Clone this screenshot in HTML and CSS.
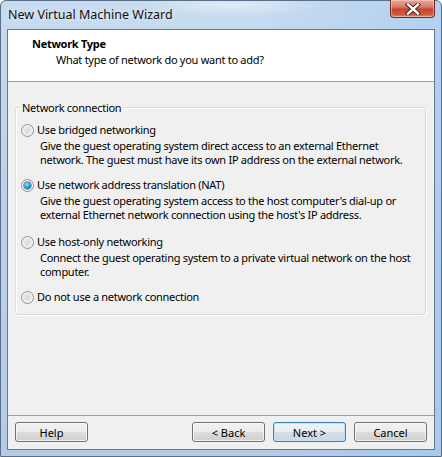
FILE: index.html
```html
<!DOCTYPE html>
<html>
<head>
<meta charset="utf-8">
<title>New Virtual Machine Wizard</title>
<link rel="stylesheet" href="styles.css">
</head>
<body>
<div class="window">
  <div class="titlebar">
    <span class="title">New Virtual Machine Wizard</span>
    <div class="close">
      <svg width="16" height="12" viewBox="0 0 16 12"><path d="M3 1.5 L13 10.5 M13 1.5 L3 10.5" stroke="#3a1a16" stroke-width="4.2" stroke-linecap="square"/><path d="M3 1.5 L13 10.5 M13 1.5 L3 10.5" stroke="#fff" stroke-width="2.4" stroke-linecap="square"/></svg>
    </div>
  </div>
  <div class="client">
    <div class="header">
      <div class="h-title">Network Type</div>
      <div class="h-sub">What type of network do you want to add?</div>
    </div>
    <div class="content">
      <fieldset class="group">
        <legend class="legend">Network connection</legend>
        <div class="option">
          <div class="opt-label"><span class="radio"></span>Use bridged networking</div>
          <div class="desc">Give the guest operating system direct access to an external Ethernet<br>network. The guest must have its own IP address on the external network.</div>
        </div>
        <div class="option">
          <div class="opt-label"><span class="radio checked"></span>Use network address translation (NAT)</div>
          <div class="desc">Give the guest operating system access to the host computer's dial-up or<br>external Ethernet network connection using the host's IP address.</div>
        </div>
        <div class="option">
          <div class="opt-label"><span class="radio"></span>Use host-only networking</div>
          <div class="desc">Connect the guest operating system to a private virtual network on the host<br>computer.</div>
        </div>
        <div class="option last">
          <div class="opt-label"><span class="radio"></span>Do not use a network connection</div>
        </div>
      </fieldset>
    </div>
    <div class="footer">
      <button class="btn">Help</button>
      <div class="spacer"></div>
      <button class="btn">&lt; Back</button>
      <button class="btn default">Next &gt;</button>
      <button class="btn">Cancel</button>
    </div>
  </div>
</div>
</body>
</html>
```

FILE: styles.css
```css
html, body {
  margin: 0;
  padding: 0;
}
body {
  width: 442px;
  height: 457px;
  overflow: hidden;
  font-family: "Noto Sans", "Open Sans", sans-serif;
  font-size: 11px;
  letter-spacing: -0.28px;
  color: #000;
}
.window {
  width: 442px;
  height: 457px;
  box-sizing: border-box;
  display: flex;
  flex-direction: column;
  border: 1px solid #5a6f86;
  border-radius: 6px 6px 0 0;
  background:
    linear-gradient(90deg, rgba(255,255,255,0) 0%, rgba(255,255,255,0) 60%, rgba(160,200,240,0.5) 100%),
    linear-gradient(180deg, #c7dbf0 0%, #bcd2ea 40%, #b4cbe6 100%);
  padding: 0 6px 6px 6px;
}
.titlebar {
  height: 28px;
  display: flex;
  align-items: flex-start;
  justify-content: space-between;
  background: radial-gradient(ellipse 90px 12px at 230px 4px, rgba(255,255,255,0.45), rgba(255,255,255,0));
  margin: 0 -6px;
  padding: 0 6px 0 7px;
}
.title {
  font-family: "Noto Sans", sans-serif;
  font-size: 12.5px;
  letter-spacing: 0;
  line-height: 16px;
  margin-top: 6px;
  color: #111;
  text-shadow: 0 0 6px rgba(255,255,255,0.9);
}
.close {
  width: 45px;
  height: 18px;
  margin-top: -1px;
  box-sizing: border-box;
  border: 1px solid #6b2b24;
  border-top: none;
  border-radius: 0 0 4px 4px;
  background: linear-gradient(180deg, #e9a99a 0%, #db7b68 40%, #c6432c 55%, #cf5a40 85%, #e08a70 100%);
  box-shadow: inset 0 0 0 1px rgba(255,220,210,0.5);
  display: flex;
  align-items: center;
  justify-content: center;
}
.client {
  flex: 1;
  display: flex;
  flex-direction: column;
  border: 1px solid #68788a;
  background: #f0f0f0;
}
.header {
  height: 52px;
  box-sizing: border-box;
  background: #fff;
  border-bottom: 1px solid #a0a0a0;
  padding: 6px 0 0 24px;
}
.h-title {
  font-weight: bold;
  line-height: 15px;
}
.h-sub {
  line-height: 15px;
  margin-top: 1px;
  padding-left: 24px;
}
.content {
  flex: 1;
  padding: 18px 8px 0 7px;
}
.group {
  margin: 0;
  padding: 7px 0 9px 0;
  border: 1px solid #d5dfe5;
  box-shadow: 1px 1px 0 #fff, inset 1px 1px 0 #fff;
  border-radius: 3px;
}
.legend {
  margin-left: 4px;
  padding: 0 2px;
  line-height: 15px;
}
.option {
  margin-bottom: 10px;
}
.option:nth-child(3) {
  margin-bottom: 12px;
}
.option.last {
  margin-bottom: 0;
}
.opt-label {
  display: flex;
  align-items: center;
  line-height: 16px;
  padding-left: 5px;
  white-space: nowrap;
}
.radio {
  width: 13px;
  height: 13px;
  box-sizing: border-box;
  border-radius: 50%;
  border: 1px solid #8e8f8f;
  background: radial-gradient(circle at 50% 50%, #d8d8d8 0%, #e6e6e6 45%, #f8f8f8 80%);
  box-shadow: inset 0 0 0 1px #f4f4f4;
  margin-right: 3px;
  display: flex;
  align-items: center;
  justify-content: center;
  flex: none;
}
.radio.checked::after {
  content: "";
  width: 7px;
  height: 7px;
  border-radius: 50%;
  background: radial-gradient(circle at 40% 35%, #9be0f8 0%, #3ea5d8 40%, #1a5e8c 100%);
  box-shadow: 0 0 0 0.5px #1d4f74;
}
.desc {
  margin-top: 1px;
  padding-left: 24px;
  line-height: 14px;
  white-space: nowrap;
}
.footer {
  height: 34px;
  box-sizing: border-box;
  border-top: 1px solid #a0a0a0;
  display: flex;
  align-items: flex-start;
  padding: 6px 7px 0 7px;
  gap: 8px;
}
.spacer {
  flex: 1;
}
.btn {
  width: 73px;
  height: 20px;
  box-sizing: border-box;
  font-family: "Noto Sans", sans-serif;
  font-size: 11px;
  letter-spacing: 0;
  color: #000;
  border: 1px solid #707070;
  border-radius: 3px;
  background: linear-gradient(180deg, #f2f2f2 0%, #ebebeb 50%, #dddddd 51%, #cfcfcf 100%);
  box-shadow: inset 0 0 0 1px rgba(255,255,255,0.7);
  padding: 0;
  line-height: 17px;
}
.btn.default {
  border-color: #3c7fb1;
  box-shadow: inset 0 0 0 1px #bfe4f7;
  background: linear-gradient(180deg, #f0f4f7 0%, #e6ecf0 50%, #d6dee4 51%, #cdd7de 100%);
}
```
